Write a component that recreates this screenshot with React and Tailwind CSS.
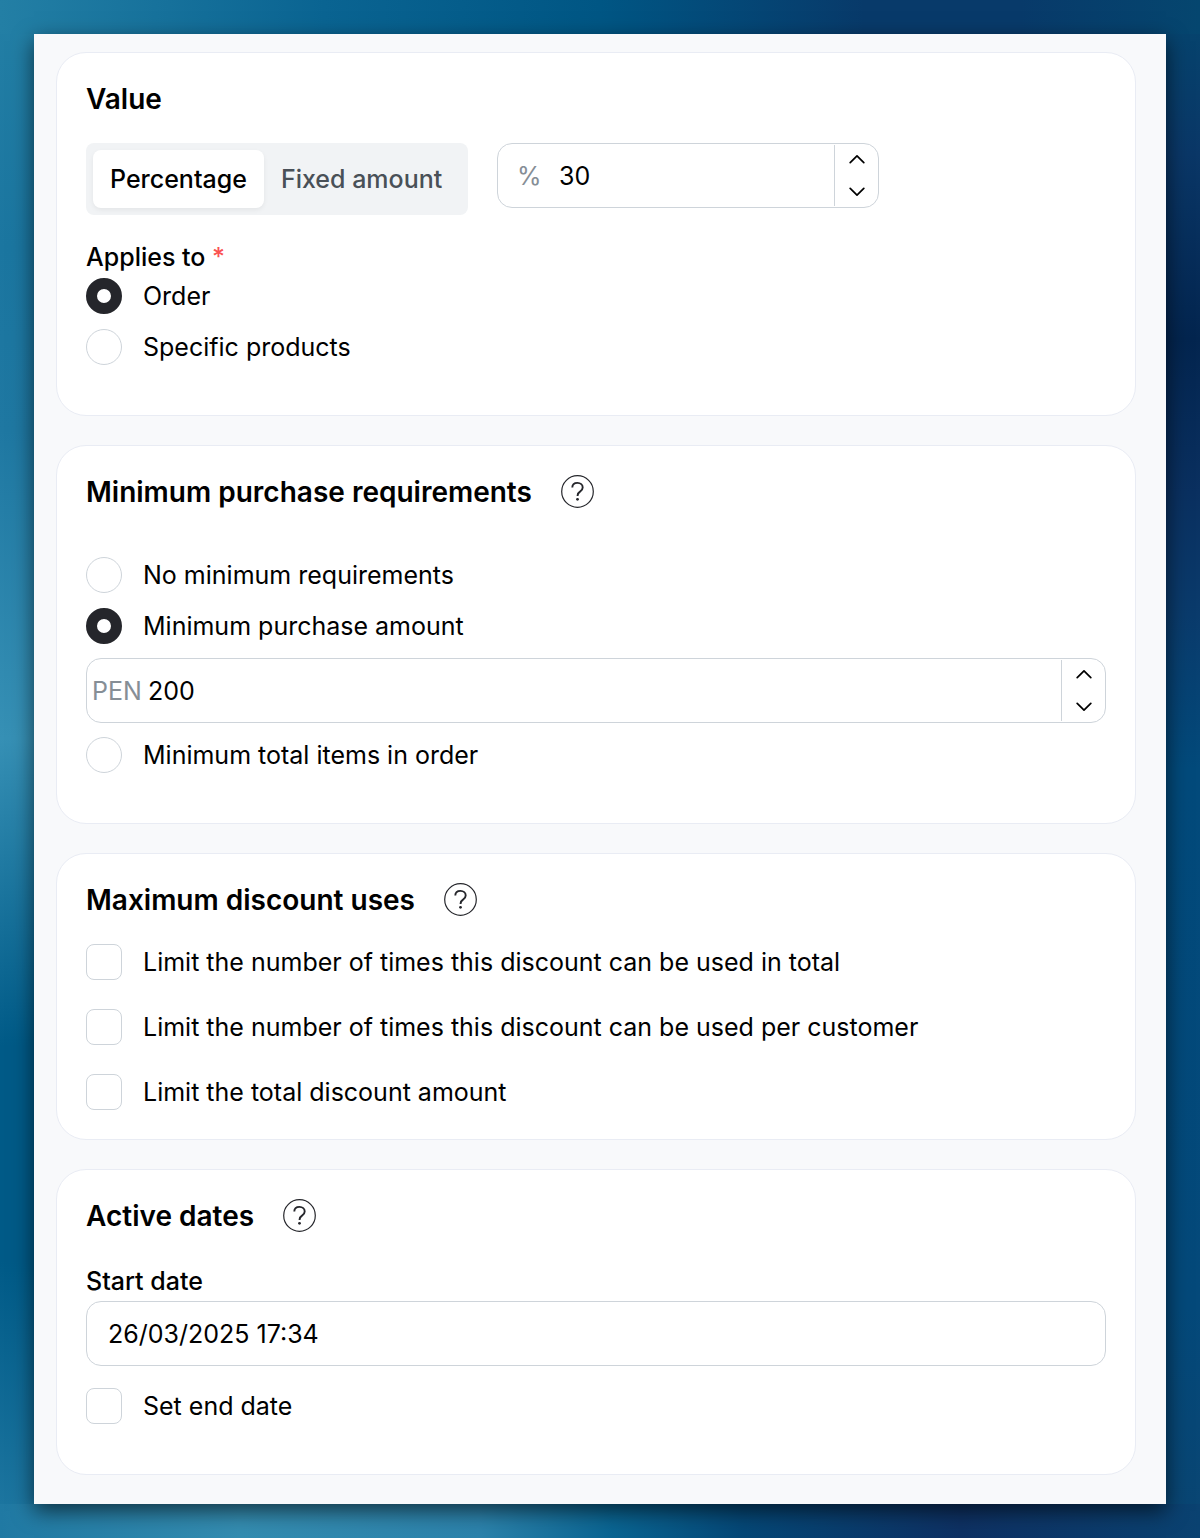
import React, { useId, useState } from 'react';

const Card = ({ title, help = false, className = '', children }) => (
  <section
    className={`rounded-[30px] border border-[#e9ecf4] bg-white px-[29px] pt-[29px] ${className}`}
  >
    <div className="flex h-[34px] items-start gap-[29px]">
      <h2 className="text-[28px] leading-[34px] font-semibold">{title}</h2>
      {help && <HelpButton topic={title} />}
    </div>
    {children}
  </section>
);

const HelpButton = ({ topic }) => (
  <button type="button" aria-label={`Help: ${topic}`} className="shrink-0 rounded-full">
    <svg viewBox="0 0 33 33" className="size-[33px]" fill="none" stroke="#25262b">
      <circle cx="16.5" cy="16.5" r="15.8" strokeWidth="1.2" />
      <path
        d="M11.3 12.6c0-2.9 2.2-4.7 5.2-4.7s5.2 1.9 5.2 4.5c0 2-1.1 3.1-2.7 4.2-1.7 1.1-2.4 2-2.4 3.9v.6"
        strokeWidth="1.9"
      />
      <circle cx="16.5" cy="24.3" r="1.4" fill="#25262b" stroke="none" />
    </svg>
  </button>
);

const Chevron = ({ down = false }) => (
  <svg
    viewBox="0 0 16 10"
    className="h-[10px] w-4"
    fill="none"
    stroke="#000"
    strokeWidth="1.7"
    strokeLinecap="round"
    strokeLinejoin="round"
  >
    <path d={down ? 'M1.2 1.4 8 8.2l6.8-6.8' : 'M1.2 8.6 8 1.8l6.8 6.8'} />
  </svg>
);

const Radio = ({ name, label, checked, onChange }) => (
  <label className="flex min-h-9 items-center gap-[21px]">
    <input
      type="radio"
      name={name}
      checked={checked}
      onChange={onChange}
      className="size-9 shrink-0 appearance-none rounded-full border border-[#ced4da] bg-white checked:border-[11px] checked:border-[#25262b]"
    />
    <span>{label}</span>
  </label>
);

const Checkbox = ({ label }) => (
  <label className="flex min-h-9 items-center gap-[21px]">
    <input
      type="checkbox"
      className="size-9 shrink-0 appearance-none rounded-lg border border-[#ced4da] bg-white checked:border-[#25262b] checked:bg-[#25262b]"
    />
    <span>{label}</span>
  </label>
);

// Numeric field with a unit on the left and step buttons on the right
const NumberField = ({ label, unit, value, onChange, unitClass, className = '' }) => {
  const step = (delta) => onChange(String(Math.max(0, (Number(value) || 0) + delta)));

  return (
    <div
      className={`flex h-[65px] overflow-hidden rounded-[15px] border border-[#ced4da] bg-white ${className}`}
    >
      <span className={`flex shrink-0 items-center text-[#868e96] ${unitClass}`}>{unit}</span>
      <input
        type="text"
        inputMode="numeric"
        aria-label={label}
        value={value}
        onChange={(e) => onChange(e.target.value)}
        className="min-w-0 flex-1 bg-transparent outline-none"
      />
      <div className="my-px flex w-11 shrink-0 flex-col justify-between border-l border-[#ced4da]">
        <button
          type="button"
          aria-label={`Increase ${label}`}
          onClick={() => step(1)}
          className="flex h-7 items-center justify-center"
        >
          <Chevron />
        </button>
        <button
          type="button"
          aria-label={`Decrease ${label}`}
          onClick={() => step(-1)}
          className="flex h-7 items-center justify-center"
        >
          <Chevron down />
        </button>
      </div>
    </div>
  );
};

const TYPES = ['Percentage', 'Fixed amount'];

const ValueCard = () => {
  const [type, setType] = useState('Percentage');
  const [amount, setAmount] = useState('30');
  const [target, setTarget] = useState('order');

  return (
    <Card title="Value" className="pb-[50px]">
      <div className="mt-[27px] flex flex-wrap items-start gap-[29px]">
        <div className="flex h-[72px] w-[382px] max-w-full rounded-lg bg-[#f1f3f5] p-[7px]">
          {TYPES.map((item) => (
            <button
              key={item}
              type="button"
              aria-pressed={type === item}
              onClick={() => setType(item)}
              className={`rounded-lg px-[17px] font-medium whitespace-nowrap ${
                type === item
                  ? 'bg-white text-black shadow-[0_2px_5px_rgba(0,0,0,0.06)]'
                  : 'text-[#495057]'
              }`}
            >
              {item}
            </button>
          ))}
        </div>
        <NumberField
          label="Discount value"
          unit="%"
          value={amount}
          onChange={setAmount}
          unitClass="w-[61px] pl-[19px]"
          className="w-[382px] max-w-full"
        />
      </div>
      <fieldset className="mt-[25px]">
        <legend className="leading-[34px] font-medium">
          Applies to <span className="text-[#fa5252]">*</span>
        </legend>
        <div className="mt-1 flex flex-col gap-[15px]">
          <Radio
            name="target"
            label="Order"
            checked={target === 'order'}
            onChange={() => setTarget('order')}
          />
          <Radio
            name="target"
            label="Specific products"
            checked={target === 'products'}
            onChange={() => setTarget('products')}
          />
        </div>
      </fieldset>
    </Card>
  );
};

const RequirementsCard = () => {
  const [rule, setRule] = useState('amount');
  const [minimum, setMinimum] = useState('200');

  return (
    <Card title="Minimum purchase requirements" help className="pb-[50px]">
      <div className="mt-12 flex flex-col gap-[14px]">
        <div className="flex flex-col gap-[15px]">
          <Radio
            name="rule"
            label="No minimum requirements"
            checked={rule === 'none'}
            onChange={() => setRule('none')}
          />
          <Radio
            name="rule"
            label="Minimum purchase amount"
            checked={rule === 'amount'}
            onChange={() => setRule('amount')}
          />
        </div>
        {rule === 'amount' && (
          <NumberField
            label="Minimum purchase amount value"
            unit="PEN"
            value={minimum}
            onChange={setMinimum}
            unitClass="w-[61px] pl-[5px]"
          />
        )}
        <Radio
          name="rule"
          label="Minimum total items in order"
          checked={rule === 'items'}
          onChange={() => setRule('items')}
        />
      </div>
    </Card>
  );
};

const UsesCard = () => (
  <Card title="Maximum discount uses" help className="pb-[29px]">
    <div className="mt-[27px] flex flex-col gap-[29px]">
      <Checkbox label="Limit the number of times this discount can be used in total" />
      <Checkbox label="Limit the number of times this discount can be used per customer" />
      <Checkbox label="Limit the total discount amount" />
    </div>
  </Card>
);

const DatesCard = () => {
  const startId = useId();
  const [start, setStart] = useState('26/03/2025 17:34');

  return (
    <Card title="Active dates" help className="pb-[50px]">
      <div className="mt-[31px] flex flex-col">
        <label htmlFor={startId} className="mb-[3px] leading-[34px] font-medium">
          Start date
        </label>
        <input
          id={startId}
          type="text"
          value={start}
          onChange={(e) => setStart(e.target.value)}
          className="mb-[22px] h-[65px] w-full rounded-[15px] border border-[#ced4da] bg-white px-[21px]"
        />
        <Checkbox label="Set end date" />
      </div>
    </Card>
  );
};

// Blue wallpaper: one gradient for each edge of the page around the panel
const WALLPAPER = [
  'bg-[linear-gradient(90deg,#237fa5_0%,#0a6492_27%,#005684_50%,#083a6a_72%,#083a6a_85%,#05466f_100%),linear-gradient(90deg,#2079a3_0%,#348cb0_20%,#2c82ab_40%,#0a6491_51%,#054776_62%,#0e3163_80%,#0a4271_100%),linear-gradient(180deg,#237fa5_0%,#1b76a0_16%,#1f78a2_28%,#3690b5_48%,#005a87_68%,#005a87_82%,#2079a3_100%),linear-gradient(180deg,#05466f_0%,#0a3767_10%,#03254f_22%,#0a3060_32%,#0a3b6c_40%,#024a7b_50%,#04497a_85%,#0a4572_100%)]',
  'bg-[position:top,bottom,left,right]',
  'bg-[size:100%_34px,100%_34px,50%_100%,50%_100%]',
  'bg-no-repeat',
].join(' ');

const App = () => (
  <div
    className={`min-h-screen p-[34px] font-[Inter,"Liberation_Sans",sans-serif] text-[25px] leading-9 text-black ${WALLPAPER}`}
  >
    <main className="flex flex-col gap-[29px] bg-[#f8f9fb] pt-[18px] pr-[30px] pb-[29px] pl-[22px] shadow-[0_7px_20px_rgba(0,0,0,0.6)]">
      <ValueCard />
      <RequirementsCard />
      <UsesCard />
      <DatesCard />
    </main>
  </div>
);

export default App;
